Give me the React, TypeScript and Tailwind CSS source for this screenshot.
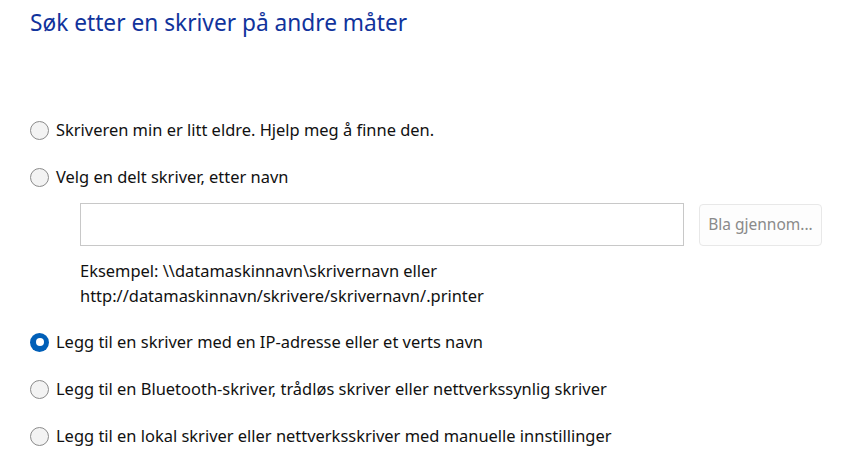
import React, { useState } from "react"

type Option = { id: string; label: string }

const options: Option[] = [
    { id: "old", label: "Skriveren min er litt eldre. Hjelp meg å finne den." },
    { id: "shared", label: "Velg en delt skriver, etter navn" },
    { id: "ip", label: "Legg til en skriver med en IP-adresse eller et verts navn" },
    { id: "bt", label: "Legg til en Bluetooth-skriver, trådløs skriver eller nettverkssynlig skriver" },
    { id: "local", label: "Legg til en lokal skriver eller nettverksskriver med manuelle innstillinger" },
]

const Radio = ({ checked }: { checked: boolean }) =>
    checked ? (
        <span className="flex h-[19px] w-[19px] shrink-0 items-center justify-center rounded-full bg-[#005fb8]">
            <span className="h-[8px] w-[8px] rounded-full bg-white" />
        </span>
    ) : (
        <span className="h-[19px] w-[19px] shrink-0 rounded-full border border-[#8b8b8b] bg-[#f3f3f3]" />
    )

const Row = ({
    option,
    selected,
    onSelect,
}: {
    option: Option
    selected: string
    onSelect: (id: string) => void
}) => (
    <label
        className="flex h-[24px] cursor-default items-center gap-[7px]"
        onClick={() => onSelect(option.id)}
    >
        <Radio checked={selected === option.id} />
        <span className="leading-[24px]">{option.label}</span>
    </label>
)

const App = () => {
    const [selected, setSelected] = useState("ip")

    return (
        <main
            className="h-[465px] w-[844px] overflow-hidden bg-white pl-[30px] text-[16.45px] text-[#111111]"
            style={{ fontFamily: '"Noto Sans", "Open Sans", sans-serif' }}
        >
            {/*   Title   */}
            <h1 className="pt-[8px] text-[22.7px] leading-[30px] font-normal text-[#11339c]">
                Søk etter en skriver på andre måter
            </h1>

            <div className="mt-[80px] flex flex-col gap-[23px]">
                <Row option={options[0]} selected={selected} onSelect={setSelected} />
                <Row option={options[1]} selected={selected} onSelect={setSelected} />
            </div>

            {/*   Shared printer name   */}
            <div className="mt-[14px] ml-[50px]">
                <div className="flex items-center gap-[15px]">
                    <input
                        type="text"
                        className="h-[43px] w-[604px] border border-[#c8c8c8] bg-white outline-0"
                    />
                    <button
                        disabled
                        className="h-[42px] w-[123px] rounded-[4px] border border-[#e8e8e8] bg-[#fdfdfd] text-[15.5px] text-[#8a8a8a]"
                    >
                        Bla gjennom...
                    </button>
                </div>
                <p className="mt-[12px] leading-[25px]">
                    Eksempel: \\datamaskinnavn\skrivernavn eller
                    <br />
                    http://datamaskinnavn/skrivere/skrivernavn/.printer
                </p>
            </div>

            <div className="mt-[22px] flex flex-col gap-[23px]">
                <Row option={options[2]} selected={selected} onSelect={setSelected} />
                <Row option={options[3]} selected={selected} onSelect={setSelected} />
                <Row option={options[4]} selected={selected} onSelect={setSelected} />
            </div>
        </main>
    )
}

export default App
